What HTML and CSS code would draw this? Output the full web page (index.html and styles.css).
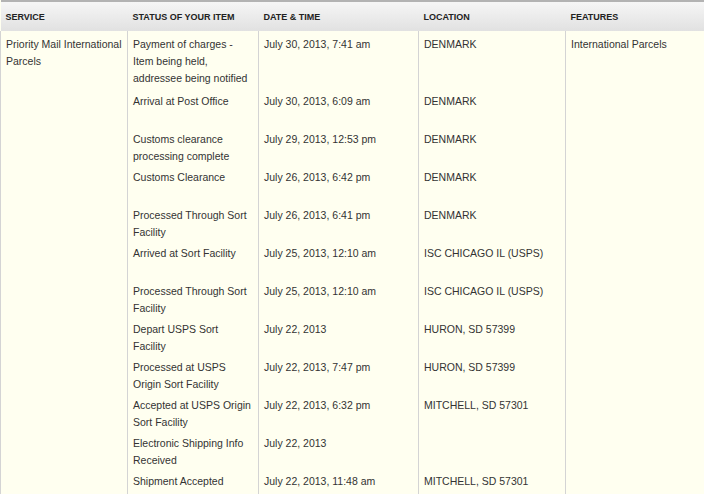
FILE: index.html
```html
<!DOCTYPE html>
<html>
<head>
<meta charset="utf-8">
<link rel="stylesheet" href="styles.css">
</head>
<body>
<table class="track">
  <colgroup>
    <col class="w1"><col class="w2"><col class="w3"><col class="w4"><col class="w5">
  </colgroup>
  <thead>
    <tr>
      <th>Service</th>
      <th>Status of Your Item</th>
      <th>Date &amp; Time</th>
      <th>Location</th>
      <th>Features</th>
    </tr>
  </thead>
  <tbody>
    <tr class="first">
      <td rowspan="12" class="c1">Priority Mail International Parcels</td>
      <td>Payment of charges - Item being held, addressee being notified</td>
      <td>July 30, 2013, 7:41 am</td>
      <td>DENMARK</td>
      <td rowspan="12" class="c5">International Parcels</td>
    </tr>
    <tr><td>Arrival at Post Office</td><td>July 30, 2013, 6:09 am</td><td>DENMARK</td></tr>
    <tr><td>Customs clearance processing complete</td><td>July 29, 2013, 12:53 pm</td><td>DENMARK</td></tr>
    <tr><td>Customs Clearance</td><td>July 26, 2013, 6:42 pm</td><td>DENMARK</td></tr>
    <tr><td>Processed Through Sort Facility</td><td>July 26, 2013, 6:41 pm</td><td>DENMARK</td></tr>
    <tr><td>Arrived at Sort Facility</td><td>July 25, 2013, 12:10 am</td><td>ISC CHICAGO IL (USPS)</td></tr>
    <tr><td>Processed Through Sort Facility</td><td>July 25, 2013, 12:10 am</td><td>ISC CHICAGO IL (USPS)</td></tr>
    <tr><td>Depart USPS Sort Facility</td><td>July 22, 2013</td><td>HURON, SD 57399</td></tr>
    <tr><td>Processed at USPS Origin Sort Facility</td><td>July 22, 2013, 7:47 pm</td><td>HURON, SD 57399</td></tr>
    <tr><td>Accepted at USPS Origin Sort Facility</td><td>July 22, 2013, 6:32 pm</td><td>MITCHELL, SD 57301</td></tr>
    <tr><td>Electronic Shipping Info Received</td><td>July 22, 2013</td><td></td></tr>
    <tr><td>Shipment Accepted</td><td>July 22, 2013, 11:48 am</td><td>MITCHELL, SD 57301</td></tr>
  </tbody>
</table>
</body>
</html>
```

FILE: styles.css
```css
html, body {
  margin: 0;
  padding: 0;
  background: #fffff0;
}
body {
  font-family: "Liberation Sans", Arial, sans-serif;
  color: #333;
  overflow: hidden;
}
.track {
  width: 704px;
  border-collapse: collapse;
  table-layout: fixed;
}
.w1 { width: 127px; }
.w2 { width: 131px; }
.w3 { width: 160px; }
.w4 { width: 147px; }
.track th {
  height: 29px;
  padding: 0 0 0 5px;
  text-align: left;
  font-size: 9px;
  font-weight: bold;
  text-transform: uppercase;
  color: #222;
  background: linear-gradient(#f6f6f6, #e1e1e1);
  border-top: 2px solid #b3b3b3;
  vertical-align: middle;
  white-space: nowrap;
}
.track td {
  font-size: 10.5px;
  line-height: 17px;
  padding: 2px 6px 2px 5px;
  height: 34px;
  vertical-align: top;
  border-left: 1px solid #d4d4d4;
  border-right: 1px solid #d4d4d4;
}
.track tr.first td {
  padding-top: 5px;
  padding-bottom: 4px;
}
.track td.c1 { padding-right: 2px; }
.track td.c5 { border-right: none; }
```
